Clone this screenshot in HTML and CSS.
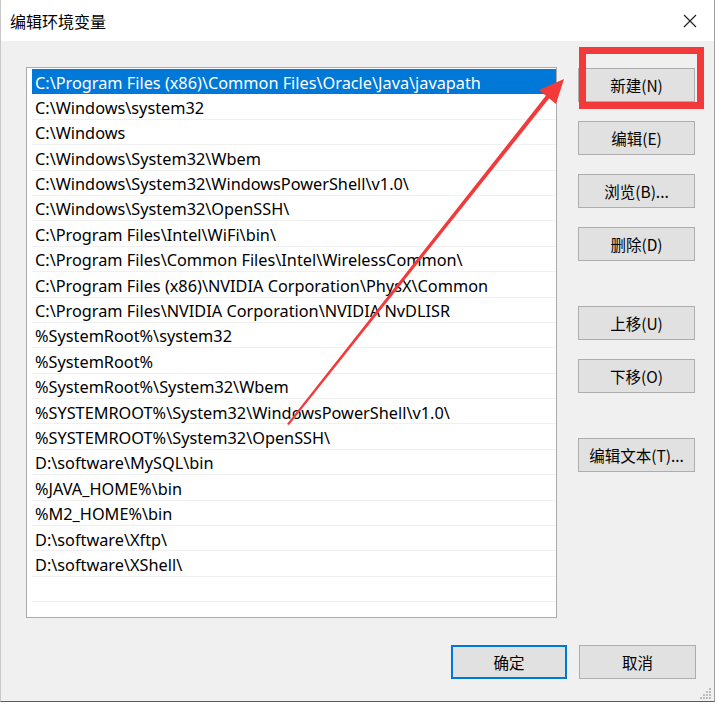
FILE: index.html
```html
<!DOCTYPE html>
<html lang="zh-CN">
  <head>
    <meta charset="UTF-8" />
    <meta name="viewport" content="width=device-width, initial-scale=1.0" />
    <title>编辑环境变量</title>
    <link rel="stylesheet" href="styles.css">
  </head>
  <body>
    <div class="window">
      <div class="titlebar">
        <span class="title">编辑环境变量</span>
        <span class="close">
          <svg width="14" height="14" viewBox="0 0 14 14"><path d="M1 1 L13 13 M13 1 L1 13" stroke="#222" stroke-width="1.2" fill="none"/></svg>
        </span>
      </div>
      <div class="body">
        <div class="main">
          <div class="list">
            <div class="row selected">C:\Program Files (x86)\Common Files\Oracle\Java\javapath</div>
            <div class="row">C:\Windows\system32</div>
            <div class="row">C:\Windows</div>
            <div class="row">C:\Windows\System32\Wbem</div>
            <div class="row">C:\Windows\System32\WindowsPowerShell\v1.0\</div>
            <div class="row">C:\Windows\System32\OpenSSH\</div>
            <div class="row">C:\Program Files\Intel\WiFi\bin\</div>
            <div class="row">C:\Program Files\Common Files\Intel\WirelessCommon\</div>
            <div class="row">C:\Program Files (x86)\NVIDIA Corporation\PhysX\Common</div>
            <div class="row">C:\Program Files\NVIDIA Corporation\NVIDIA NvDLISR</div>
            <div class="row">%SystemRoot%\system32</div>
            <div class="row">%SystemRoot%</div>
            <div class="row">%SystemRoot%\System32\Wbem</div>
            <div class="row">%SYSTEMROOT%\System32\WindowsPowerShell\v1.0\</div>
            <div class="row">%SYSTEMROOT%\System32\OpenSSH\</div>
            <div class="row">D:\software\MySQL\bin</div>
            <div class="row">%JAVA_HOME%\bin</div>
            <div class="row">%M2_HOME%\bin</div>
            <div class="row">D:\software\Xftp\</div>
            <div class="row">D:\software\XShell\</div>
            <div class="row"></div>
            <div class="row"></div>
          </div>
          <div class="side">
            <div class="btn new">新建(N)</div>
            <div class="btn">编辑(E)</div>
            <div class="btn">浏览(B)...</div>
            <div class="btn">删除(D)</div>
            <div class="btn group">上移(U)</div>
            <div class="btn">下移(O)</div>
            <div class="btn group">编辑文本(T)...</div>
          </div>
        </div>
        <div class="footer">
          <div class="btn ok">确定</div>
          <div class="btn">取消</div>
        </div>
        <div class="grip">
          <svg width="12" height="12" viewBox="0 0 12 12" fill="#bdbdbd">
            <rect x="9" y="0" width="2" height="2"/>
            <rect x="6" y="3" width="2" height="2"/><rect x="9" y="3" width="2" height="2"/>
            <rect x="3" y="6" width="2" height="2"/><rect x="6" y="6" width="2" height="2"/><rect x="9" y="6" width="2" height="2"/>
            <rect x="0" y="9" width="2" height="2"/><rect x="3" y="9" width="2" height="2"/><rect x="6" y="9" width="2" height="2"/><rect x="9" y="9" width="2" height="2"/>
          </svg>
        </div>
      </div>
      <div class="highlight-box"></div>
      <svg class="arrow" width="719" height="704" viewBox="0 0 719 704">
        <polygon points="287,424 289,425 551,96 548,93" fill="#f23a3a"/>
        <polygon points="564,79 539,90 556,104" fill="#f23a3a"/>
      </svg>
    </div>
  </body>
</html>
```

FILE: styles.css
```css
body {
  margin: 0;
  background: #ffffff;
  font-family: "Noto Sans", "Noto Sans CJK SC", sans-serif;
  font-size: 15px;
  color: #000;
}

.window {
  position: relative;
  width: 715px;
  height: 702px;
  box-sizing: border-box;
  border-left: 1px solid #c8c8c8;
  border-right: 1px solid #a0a0a0;
  border-bottom: 1px solid #5a5a5a;
  display: flex;
  flex-direction: column;
  overflow: hidden;
}

.titlebar {
  height: 41px;
  flex-shrink: 0;
  background: #fff;
  display: flex;
  align-items: center;
  justify-content: space-between;
  padding: 0 17px 0 9px;
}
.titlebar .title {
  font-family: "Noto Sans CJK SC", sans-serif;
  font-size: 16px;
  color: #000;
}
.titlebar .close {
  display: flex;
}

.body {
  position: relative;
  flex: 1;
  background: #f0f0f0;
  padding: 26px 0 0 25px;
  display: flex;
  flex-direction: column;
}

.main {
  display: flex;
  gap: 21px;
}

.list {
  width: 531px;
  height: 551px;
  box-sizing: border-box;
  border: 1px solid #ababab;
  background: #fff;
  padding: 1px 0 0 5px;
  overflow: hidden;
  flex-shrink: 0;
}
.row {
  height: 25.4px;
  box-sizing: border-box;
  border-bottom: 1px solid #f0f0f0;
  padding: 1.5px 0 0 3px;
  line-height: 24px;
  font-size: 16.3px;
  white-space: nowrap;
  color: #000;
}
.row.selected {
  background: #0078d7;
  color: #fff;
  border-bottom-color: #0078d7;
}

.side {
  display: flex;
  flex-direction: column;
  gap: 19px;
  padding-top: 1px;
}

.btn {
  width: 117px;
  height: 34px;
  box-sizing: border-box;
  background: #e1e1e1;
  border: 1px solid #adadad;
  display: flex;
  align-items: center;
  justify-content: center;
  font-family: "Noto Sans CJK SC", sans-serif;
  font-size: 15.5px;
  color: #000;
}
.side .group {
  margin-top: 26px;
}

.footer {
  display: flex;
  justify-content: flex-end;
  gap: 12px;
  padding-right: 18px;
  margin-top: 27px;
}
.footer .btn.ok {
  width: 116px;
  border: 2px solid #0078d7;
}

.grip {
  position: absolute;
  right: 2px;
  bottom: 1px;
  display: flex;
}

.highlight-box {
  position: absolute;
  left: 578px;
  top: 47px;
  width: 125px;
  height: 62px;
  box-sizing: border-box;
  border: 7px solid #f23a3a;
}

.arrow {
  position: absolute;
  left: -1px;
  top: 0;
  pointer-events: none;
}
```
